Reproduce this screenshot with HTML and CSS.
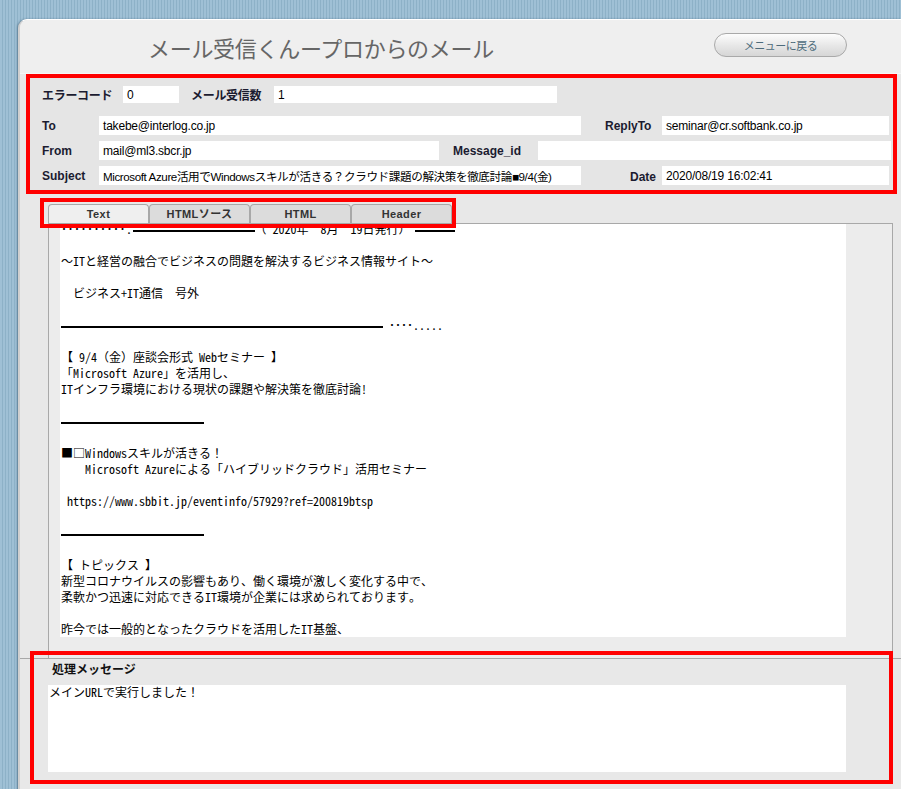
FILE: index.html
```html
<!DOCTYPE html>
<html lang="ja">
  <head>
    <meta charset="UTF-8" />
    <title>メール受信くんープロからのメール</title>
    <link rel="stylesheet" href="styles.css">
  </head>
  <body>
    <div class="page">
      <div class="title-bar">
        <h1 class="title">メール受信くんープロからのメール</h1>
        <button class="menu-btn">メニューに戻る</button>
      </div>

      <div class="info">
        <div class="row row-top">
          <span class="label jp lbl-code">エラーコード</span>
          <span class="field f-code">0</span>
          <span class="label jp lbl-count">メール受信数</span>
          <span class="field f-count">1</span>
        </div>
        <div class="row">
          <span class="label lbl1">To</span>
          <span class="field f-wide">takebe@interlog.co.jp</span>
          <span class="label lbl2 lbl-reply">ReplyTo</span>
          <span class="field f-right">seminar@cr.softbank.co.jp</span>
        </div>
        <div class="row">
          <span class="label lbl1">From</span>
          <span class="field f-from">mail@ml3.sbcr.jp</span>
          <span class="label lbl2 lbl-msgid">Message_id</span>
          <span class="field f-msgid"></span>
        </div>
        <div class="row">
          <span class="label lbl1">Subject</span>
          <span class="field f-wide f-subject">Microsoft Azure活用でWindowsスキルが活きる？クラウド課題の解決策を徹底討論■9/4(金)</span>
          <span class="label lbl2 lbl-date">Date</span>
          <span class="field f-right">2020/08/19 16:02:41</span>
        </div>
      </div>

      <div class="tabs">
        <span class="tab active">Text</span>
        <span class="tab">HTMLソース</span>
        <span class="tab">HTML</span>
        <span class="tab">Header</span>
      </div>

      <div class="tab-panel">
        <div class="mail-text">
<div class="mail-body"><span class="dots">･･････････.</span><span class="rule rule-a"></span>（ 2020年　8月　19日発行）<span class="rule rule-b"></span>

～ITと経営の融合でビジネスの問題を解決するビジネス情報サイト～

　ビジネス+IT通信　号外

<span class="rule rule-long"></span> ････.....

【 9/4（金）座談会形式 Webセミナー 】
「Microsoft Azure」を活用し、
ITインフラ環境における現状の課題や解決策を徹底討論!

<span class="rule rule-short"></span>

■□Windowsスキルが活きる！
　　Microsoft Azureによる「ハイブリッドクラウド」活用セミナー

 https://www.sbbit.jp/eventinfo/57929?ref=200819btsp

<span class="rule rule-short"></span>

【 トピックス 】
新型コロナウイルスの影響もあり、働く環境が激しく変化する中で、
柔軟かつ迅速に対応できるIT環境が企業には求められております。

昨今では一般的となったクラウドを活用したIT基盤、</div>
        </div>
      </div>

      <div class="message">
        <div class="message-label">処理メッセージ</div>
        <div class="message-box">メインURLで実行しました！</div>
      </div>
    </div>
  </body>
</html>
```

FILE: styles.css
```css
*,
*::before,
*::after {
  box-sizing: border-box;
}
html,
body {
  margin: 0;
  height: 100%;
  overflow: hidden;
}
body {
  background: repeating-linear-gradient(90deg, #9fc0d5 0 2px, #8db1c7 2px 3px);
  font-family: "Liberation Sans", "Noto Sans CJK JP", sans-serif;
  font-size: 12px;
  color: #000;
}
.page {
  margin: 19px 0 0 18px;
  width: 883px;
  height: 800px;
  background: #e8e8e8;
  border-top: 1px solid #fff;
  border-left: 2px solid #cfcfcf;
  border-top-left-radius: 9px;
  box-shadow: -1px 0 2px rgba(40, 70, 95, 0.45);
}
.title-bar {
  height: 54px;
  display: flex;
  align-items: center;
  padding-left: 128px;
  background: #efefef;
  border-top-left-radius: 8px;
  border-bottom: 1px solid #f6f6f6;
}
.title {
  margin: 0;
  flex: 1;
  font-family: "Noto Sans CJK JP", sans-serif;
  font-size: 22px;
  font-weight: normal;
  color: #666;
  letter-spacing: -0.3px;
}
.menu-btn {
  width: 133px;
  height: 24px;
  margin: 0 54px 3px 0;
  border: 1px solid #a9a9a9;
  border-radius: 12px;
  background: linear-gradient(#fdfdfd, #e6e6e6 55%, #d6d6d6);
  font-family: "Noto Sans CJK JP", sans-serif;
  font-size: 11px;
  color: #4d6b7b;
  letter-spacing: -0.5px;
  padding: 0;
}

/* header fields */
.info {
  margin-left: 6px;
  width: 871px;
  border: 4px solid #f00;
  background: #e5e5e5;
  padding: 8px 0 5px 12px;
}
.row {
  display: flex;
  align-items: center;
  height: 19px;
  margin-bottom: 6px;
}
.row:last-child {
  margin-bottom: 0;
}
.row-top {
  height: 17px;
  margin-bottom: 13px;
}
.label {
  font-weight: bold;
  color: #1b1b30;
  white-space: nowrap;
}
.jp {
  font-family: "Noto Sans CJK JP", sans-serif;
  font-size: 12px;
  letter-spacing: -0.3px;
}
.lbl-code {
  width: 81px;
}
.lbl-count {
  width: 83px;
  margin-left: 12px;
}
.lbl1 {
  width: 57px;
}
.lbl2 {
  text-align: left;
}
.lbl-reply {
  width: 81px;
  padding-left: 24px;
}
.lbl-msgid {
  width: 99px;
  padding-left: 14px;
}
.lbl-date {
  width: 81px;
  padding-left: 49px;
  padding-top: 3px;
}
.field {
  height: 100%;
  background: #fff;
  padding: 0 4px;
  display: flex;
  align-items: center;
  white-space: nowrap;
  overflow: hidden;
  font-family: "Liberation Sans", "Noto Sans CJK JP", sans-serif;
  font-size: 12px;
  letter-spacing: -0.2px;
}
.f-subject {
  font-size: 11.6px;
  letter-spacing: -0.4px;
}
.f-code {
  width: 56px;
}
.f-count {
  width: 283px;
}
.f-wide {
  width: 482px;
}
.f-from {
  width: 340px;
}
.f-right {
  width: 227px;
}
.f-msgid {
  width: 353px;
}

/* tabs */
.tabs {
  position: relative;
  display: flex;
  margin: 10px 0 0 28px;
  width: 404px;
}
.tabs::after {
  content: "";
  position: absolute;
  top: -6px;
  left: -8px;
  right: -4px;
  bottom: -5px;
  border: 4px solid #f00;
  z-index: 2;
}
.tab {
  width: 101px;
  height: 19px;
  border: 1px solid #a8a8a8;
  border-bottom: none;
  border-radius: 4px 4px 0 0;
  background: #dcdcdc;
  text-align: center;
  line-height: 18px;
  font-family: "Liberation Sans", "Noto Sans CJK JP", sans-serif;
  font-size: 11px;
  font-weight: bold;
  color: #333;
  letter-spacing: 0.4px;
}
.tab.active {
  background: #efefef;
}

/* mail text */
.tab-panel {
  margin-left: 28px;
  width: 845px;
  border: 1px solid #a8a8a8;
  border-bottom: none;
  background: #ececec;
  padding: 0 0 21px 11px;
}
.mail-text {
  width: 786px;
  height: 413px;
  background: #fff;
  overflow: hidden;
}
.mail-body {
  margin-top: -3px;
  padding-left: 1px;
  white-space: pre;
  font-family: "Noto Sans Mono CJK JP", "Noto Sans CJK JP", monospace;
  font-size: 12px;
  line-height: 16px;
}
.rule {
  display: inline-block;
  height: 2px;
  background: #000;
  vertical-align: middle;
}
.rule-long {
  width: 322px;
}
.rule-short {
  width: 143px;
}
.rule-a {
  width: 122px;
}
.rule-b {
  width: 40px;
  margin-left: 4px;
}
.dots {
  letter-spacing: 0.5px;
}

/* process message */
.message {
  position: relative;
  border-top: 1px solid #a8a8a8;
  height: 140px;
}
.message::after {
  content: "";
  position: absolute;
  top: -8px;
  left: 10px;
  right: 8px;
  height: 133px;
  border: 4px solid #f00;
}
.message-label {
  height: 26px;
  padding: 2px 0 0 32px;
  line-height: 16px;
  font-family: "Noto Sans CJK JP", sans-serif;
  font-weight: bold;
  font-size: 12px;
  color: #111;
}
.message-box {
  margin-left: 28px;
  width: 798px;
  height: 87px;
  background: #fff;
  padding: 0 1px;
  line-height: 14px;
  font-family: "Noto Sans Mono CJK JP", "Noto Sans CJK JP", monospace;
  font-size: 12px;
}
```
